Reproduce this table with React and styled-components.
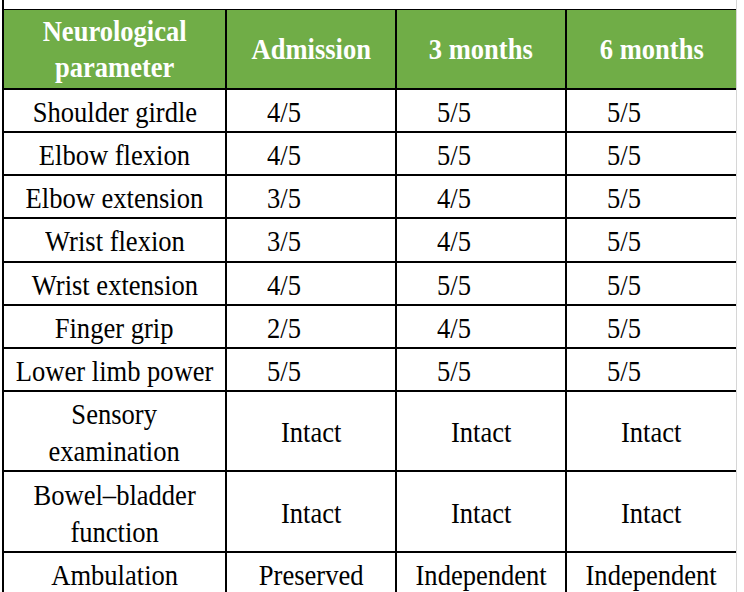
import React from "react";
import styled, { createGlobalStyle, css } from "styled-components";

const Global = createGlobalStyle`
  html, body { margin: 0; padding: 0; background: #ffffff; }
  body { font-family: "Liberation Serif", "Times New Roman", serif; }
`;

const Sheet = styled.div`
  margin-left: 2px;
  width: 735px;
  height: 592px;
  box-sizing: border-box;
  border-left: 2px solid #000;
  border-right: 1px solid #d6d6d6;
  padding-top: 9px;
  overflow: hidden;
`;

const Grid = styled.div`
  display: grid;
  grid-template-columns: 223px 170px 170px 169px;
  border-top: 1px solid #000;
`;

const Cell = styled.div`
  box-sizing: border-box;
  height: ${(p) => p.$h}px;
  display: flex;
  align-items: center;
  justify-content: ${(p) => (p.$left ? "flex-start" : "center")};
  padding-left: ${(p) => (p.$left ? "40px" : "0")};
  padding-top: ${(p) => (p.$head ? "0" : "2px")};
  border-bottom: ${(p) => (p.$noBottom ? "none" : "2px solid #000")};
  border-right: ${(p) => (p.$last ? "none" : "2px solid #000")};
  background: ${(p) => (p.$head ? "#70ad47" : "#ffffff")};
  white-space: nowrap;
  overflow: visible;
`;

const Text = styled.span`
  display: inline-block;
  text-align: center;
  font-family: "Liberation Serif", "Times New Roman", serif;
  white-space: pre;
  ${(p) =>
    p.$head
      ? css`
          font-size: 29px;
          font-weight: 700;
          color: #ffffff;
          line-height: 36px;
          transform: scaleX(0.915);
        `
      : css`
          font-size: 30px;
          font-weight: 400;
          color: #000000;
          line-height: ${p.$multi ? "37px" : "normal"};
          transform: scaleX(0.885);
        `}
  transform-origin: ${(p) => (p.$left ? "left center" : "center center")};
`;

const header = ["Neurological\nparameter", "Admission", "3 months", "6 months"];

const rows = [
  { h: 43, cells: ["Shoulder girdle", "4/5", "5/5", "5/5"] },
  { h: 43, cells: ["Elbow flexion", "4/5", "5/5", "5/5"] },
  { h: 43, cells: ["Elbow extension", "3/5", "4/5", "5/5"] },
  { h: 44, cells: ["Wrist flexion", "3/5", "4/5", "5/5"] },
  { h: 43, cells: ["Wrist extension", "4/5", "5/5", "5/5"] },
  { h: 43, cells: ["Finger grip", "2/5", "4/5", "5/5"] },
  { h: 43, cells: ["Lower limb power", "5/5", "5/5", "5/5"] },
  { h: 80, multi: true, cells: ["Sensory\nexamination", "Intact", "Intact", "Intact"] },
  { h: 81, multi: true, cells: ["Bowel\u2013bladder\nfunction", "Intact", "Intact", "Intact"] },
  { h: 41, last: true, cells: ["Ambulation", "Preserved", "Independent", "Independent"] },
];

export default function App() {
  return (
    <>
      <Global />
      <Sheet>
        <Grid>
          {header.map((t, i) => (
            <Cell key={"h" + i} $h={80} $head $last={i === 3}>
              <Text $head>{t}</Text>
            </Cell>
          ))}
          {rows.map((r, ri) =>
            r.cells.map((t, ci) => {
              const left = ci > 0 && /\d\/\d/.test(t);
              return (
                <Cell
                  key={ri + "-" + ci}
                  $h={r.h}
                  $left={left}
                  $last={ci === 3}
                  $noBottom={r.last}
                >
                  <Text $left={left} $multi={r.multi && t.includes("\n")}>
                    {t}
                  </Text>
                </Cell>
              );
            })
          )}
        </Grid>
      </Sheet>
    </>
  );
}
